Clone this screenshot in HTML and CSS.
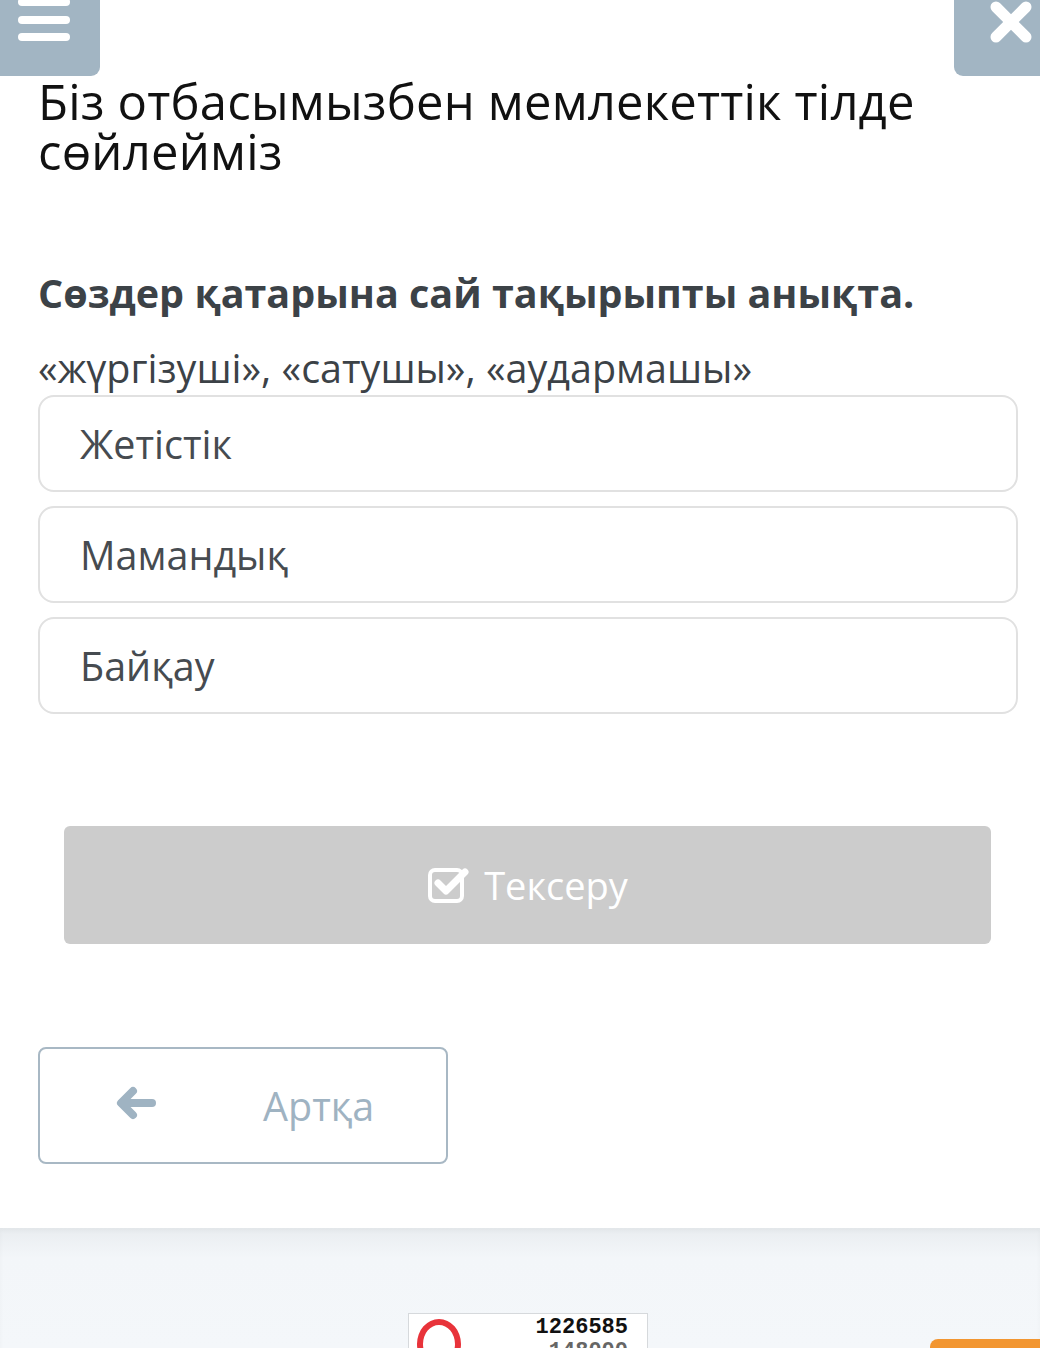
FILE: index.html
```html
<!DOCTYPE html>
<html lang="kk">
<head>
<meta charset="utf-8">
<link rel="stylesheet" href="styles.css">
</head>
<body>
<div class="page">
  <div class="topbar">
    <div class="menu-btn">
      <svg width="100" height="76" viewBox="0 0 100 76"><g stroke="#fff" stroke-width="8" stroke-linecap="round"><line x1="22" y1="2" x2="66" y2="2"/><line x1="22" y1="20" x2="66" y2="20"/><line x1="22" y1="37" x2="66" y2="37"/></g></svg>
    </div>
    <div class="close-btn">
      <svg width="86" height="76" viewBox="0 0 86 76"><g stroke="#fff" stroke-width="11" stroke-linecap="round"><line x1="42" y1="7" x2="72" y2="37"/><line x1="72" y1="7" x2="42" y2="37"/></g></svg>
    </div>
  </div>
  <main class="content">
    <h1 class="title">Біз отбасымызбен мемлекеттік тілде сөйлеймiз</h1>
    <h2 class="question">Сөздер қатарына сай тақырыпты анықта.</h2>
    <p class="words">«жүргізуші», «сатушы», «аудармашы»</p>
    <div class="options">
      <div class="option">Жетістік</div>
      <div class="option">Мамандық</div>
      <div class="option">Байқау</div>
    </div>
    <div class="check-wrap">
      <div class="check-btn">
        <svg width="44" height="40" viewBox="0 0 44 40"><rect x="3" y="6" width="32" height="31" rx="5" fill="none" stroke="#fff" stroke-width="4"/><path d="M11 19 L19 27 L38 8" fill="none" stroke="#fff" stroke-width="7" stroke-linecap="round" stroke-linejoin="round"/></svg>
        <span>Тексеру</span>
      </div>
    </div>
    <div class="back-btn">
      <svg class="arrow" width="42" height="36" viewBox="0 0 42 36"><g fill="none" stroke="#9fb3c2" stroke-width="8" stroke-linecap="round" stroke-linejoin="round"><path d="M18 6 L6 18 L18 30"/><path d="M7 18 L37 18"/></g></svg>
      <span>Артқа</span>
    </div>
  </main>
  <footer class="footer">
    <div class="counter">
      <div class="ring"></div>
      <div class="nums"><div class="n1">1226585</div><div class="n2">148000</div></div>
    </div>
    <div class="orange"></div>
  </footer>
</div>
</body>
</html>
```
FILE: styles.css
```css
html, body {
  margin: 0;
  padding: 0;
  background: #ffffff;
}
body {
  font-family: "Open Sans", "Noto Sans", sans-serif;
  width: 1040px;
  height: 1348px;
  overflow: hidden;
}
.page {
  position: relative;
  height: 1348px;
  overflow: hidden;
}
.topbar {
  display: flex;
  justify-content: space-between;
  height: 76px;
}
.menu-btn {
  width: 100px;
  height: 76px;
  background: #a2b5c3;
  border-bottom-right-radius: 9px;
}
.close-btn {
  width: 86px;
  height: 76px;
  background: #a2b5c3;
  border-bottom-left-radius: 9px;
}
.menu-btn svg, .close-btn svg { display: block; }
.content {
  padding: 0 22px 64px 38px;
}
.title {
  margin: 0;
  font-size: 49px;
  line-height: 50px;
  font-weight: 400;
  color: #111;
  letter-spacing: 0.2px;
}
.question {
  margin: 92px 0 0 0;
  font-size: 39.5px;
  line-height: 50px;
  font-weight: 700;
  color: #3c4247;
}
.words {
  margin: 25px 0 0 0;
  font-size: 39.5px;
  line-height: 50px;
  color: #3c4247;
}
.options {
  margin-top: 2px;
  display: flex;
  flex-direction: column;
  gap: 14px;
}
.option {
  height: 93px;
  border: 2px solid #e1e1e1;
  border-radius: 16px;
  padding-left: 40px;
  display: flex;
  align-items: center;
  font-size: 39.5px;
  color: #464b50;
}
.check-wrap {
  margin-top: 112px;
  padding: 0 27px 0 26px;
}
.check-btn {
  height: 118px;
  background: #cccccc;
  border-radius: 6px;
  display: flex;
  align-items: center;
  justify-content: center;
  gap: 13px;
  color: #fff;
  font-size: 38px;
}
.check-btn svg { margin-top: -3px; }
.back-btn {
  margin-top: 103px;
  width: 406px;
  height: 113px;
  border: 2px solid #a8b8c4;
  border-radius: 8px;
  display: flex;
  align-items: center;
  color: #9fb3c2;
  font-size: 39.5px;
}
.back-btn .arrow {
  margin-left: 75px;
  margin-top: -6px;
}
.back-btn span {
  margin-left: 106px;
}
.footer {
  height: 120px;
  background: linear-gradient(#e9edf0 0px, #f3f6f9 30px, #f4f7fa 100%);
  box-shadow: inset 0 3px 4px rgba(0,0,0,0.03);
  display: flex;
  padding-top: 85px;
  padding-left: 408px;
  box-sizing: border-box;
}
.counter {
  width: 240px;
  height: 60px;
  background: #fff;
  border: 1px solid #d6d9dc;
  box-sizing: border-box;
  display: flex;
}
.ring {
  width: 44px;
  height: 50px;
  border: 6px solid #e8333a;
  border-radius: 50%;
  margin: 5px 0 0 8px;
  box-sizing: border-box;
}
.nums {
  margin-left: auto;
  margin-right: 19px;
  text-align: right;
  font-family: "Liberation Mono", "DejaVu Sans Mono", monospace;
  font-weight: 700;
}
.n1 {
  font-size: 22px;
  line-height: 28px;
  color: #111;
  letter-spacing: 0;
}
.n2 {
  font-size: 22px;
  line-height: 20px;
  color: #666;
}
.orange {
  position: absolute;
  left: 930px;
  top: 1339px;
  width: 130px;
  height: 40px;
  background: #f29631;
  border-radius: 8px;
}
```
